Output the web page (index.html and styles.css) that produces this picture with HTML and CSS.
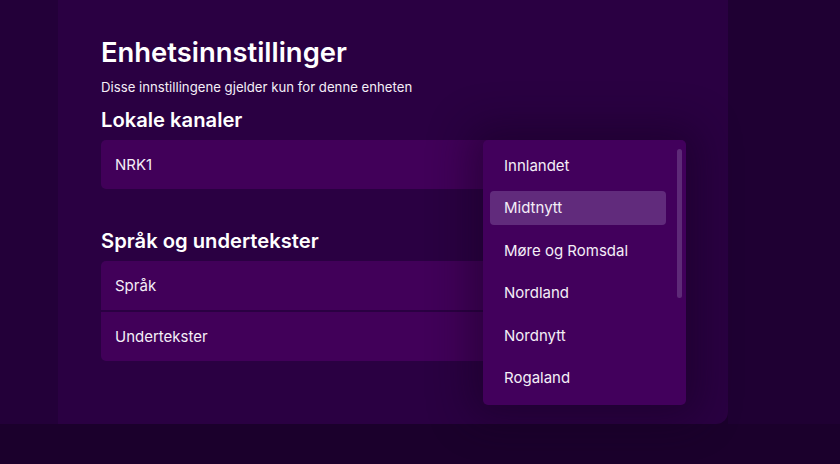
FILE: index.html
```html
<!DOCTYPE html>
<html lang="no">
<head>
<meta charset="utf-8">
<title>Enhetsinnstillinger</title>
<link rel="stylesheet" href="styles.css">
</head>
<body>
<div class="screen">
  <div class="top">
    <div class="rail"></div>
    <main class="panel">
      <h1 class="title">Enhetsinnstillinger</h1>
      <p class="subtitle">Disse innstillingene gjelder kun for denne enheten</p>
      <h2 class="heading">Lokale kanaler</h2>
      <div class="group group-local">
        <div class="row row-single">NRK1</div>
        <div class="dropdown">
          <ul class="options">
            <li class="option">Innlandet</li>
            <li class="option option-active">Midtnytt</li>
            <li class="option">Møre og Romsdal</li>
            <li class="option">Nordland</li>
            <li class="option">Nordnytt</li>
            <li class="option">Rogaland</li>
          </ul>
          <div class="scrollbar"></div>
        </div>
      </div>
      <h2 class="heading heading-lang">Språk og undertekster</h2>
      <div class="group">
        <div class="row row-first">Språk</div>
        <div class="row row-last">Undertekster</div>
      </div>
    </main>
    <div class="aside"></div>
  </div>
  <div class="bottom"></div>
</div>
</body>
</html>
```

FILE: styles.css
```css
* { box-sizing: border-box; }
html, body { margin: 0; padding: 0; }
body {
  width: 840px;
  height: 464px;
  overflow: hidden;
  background: #1b002c;
  font-family: "Inter", "Noto Sans", sans-serif;
  color: #f4eef7;
}
.screen { display: flex; flex-direction: column; height: 464px; }
.top { display: flex; height: 424px; }
.rail { width: 58px; background: #230039; }
.aside { flex: 1; background: #1f0033; }
.bottom { height: 40px; background: #1b002c; }
.panel {
  width: 670px;
  background: #2a0042;
  border-bottom-right-radius: 12px;
  padding: 36px 42px 0 43px;
  position: relative;
}
.title {
  margin: 0;
  font-size: 27.4px;
  line-height: 32px;
  font-weight: 600;
  color: #ffffff;
}
.subtitle {
  margin: 10px 0 0;
  font-size: 13.2px;
  line-height: 18px;
  color: #f4eef7;
}
.heading {
  margin: 12px 0 0;
  font-size: 20.2px;
  line-height: 24px;
  font-weight: 600;
  color: #ffffff;
}
.heading-lang { margin-top: 40px; }
.group {
  margin-top: 8px;
  display: flex;
  flex-direction: column;
  gap: 2px;
  position: relative;
}
.row {
  height: 49px;
  background: #410059;
  display: flex;
  align-items: center;
  padding-left: 14px;
  font-size: 15px;
}
.row-single { border-radius: 5px; }
.row-first { border-radius: 5px 5px 0 0; }
.row-last { border-radius: 0 0 5px 5px; }
.dropdown {
  position: absolute;
  top: 0;
  right: 0;
  width: 203px;
  height: 265px;
  background: #42005c;
  border-radius: 5px;
  box-shadow: 0 0 40px 14px rgba(20, 0, 30, 0.45);
  padding: 8px 0 0 7px;
  z-index: 2;
}
.options {
  list-style: none;
  margin: 0;
  padding: 0;
  width: 176px;
  display: flex;
  flex-direction: column;
  gap: 8.6px;
}
.option {
  height: 34px;
  display: flex;
  align-items: center;
  padding-left: 14px;
  font-size: 15px;
  border-radius: 4px;
  color: #f4eef7;
}
.option-active { background: #612b7c; }
.scrollbar {
  position: absolute;
  left: 194px;
  top: 9px;
  width: 5px;
  height: 149px;
  border-radius: 3px;
  background: #5e2a78;
}
```
